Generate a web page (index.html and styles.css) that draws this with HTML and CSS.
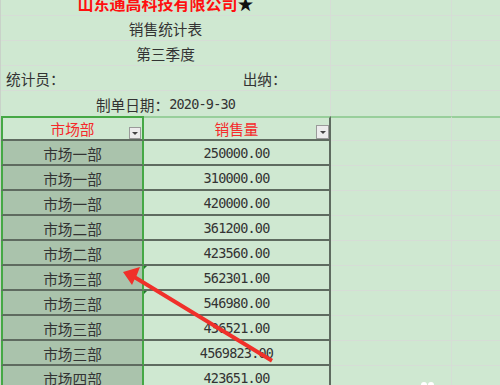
FILE: index.html
```html
<!DOCTYPE html>
<html lang="zh">
<head>
<meta charset="utf-8">
<title>销售统计表</title>
<link rel="stylesheet" href="styles.css">
</head>
<body>
<div class="sheet">
  <div class="row top">
    <div class="cell merged title">山东通高科技有限公司<span class="star">★</span></div>
    <div class="cell c"></div>
    <div class="cell d"></div>
  </div>
  <div class="row top">
    <div class="cell merged center">销售统计表</div>
    <div class="cell c"></div>
    <div class="cell d"></div>
  </div>
  <div class="row top">
    <div class="cell merged center">第三季度</div>
    <div class="cell c"></div>
    <div class="cell d"></div>
  </div>
  <div class="row top">
    <div class="cell merged split"><span>统计员：</span><span class="cashier">出纳：</span></div>
    <div class="cell c"></div>
    <div class="cell d"></div>
  </div>
  <div class="row top nobottom">
    <div class="cell merged center">制单日期：<span class="num">2020-9-30</span></div>
    <div class="cell c"></div>
    <div class="cell d"></div>
  </div>

  <div class="row head">
    <div class="cell a">市场部<span class="drop small"></span></div>
    <div class="cell b">销售量<span class="drop"></span></div>
    <div class="cell c"></div>
    <div class="cell d"></div>
  </div>
  <div class="row data"><div class="cell a">市场一部</div><div class="cell b num">250000.00</div><div class="cell c"></div><div class="cell d"></div></div>
  <div class="row data"><div class="cell a">市场一部</div><div class="cell b num">310000.00</div><div class="cell c"></div><div class="cell d"></div></div>
  <div class="row data"><div class="cell a">市场一部</div><div class="cell b num">420000.00</div><div class="cell c"></div><div class="cell d"></div></div>
  <div class="row data"><div class="cell a">市场二部</div><div class="cell b num">361200.00</div><div class="cell c"></div><div class="cell d"></div></div>
  <div class="row data"><div class="cell a">市场二部</div><div class="cell b num">423560.00</div><div class="cell c"></div><div class="cell d"></div></div>
  <div class="row data"><div class="cell a">市场三部</div><div class="cell b num flag">562301.00</div><div class="cell c"></div><div class="cell d"></div></div>
  <div class="row data"><div class="cell a">市场三部</div><div class="cell b num flag">546980.00</div><div class="cell c"></div><div class="cell d"></div></div>
  <div class="row data"><div class="cell a">市场三部</div><div class="cell b num">436521.00</div><div class="cell c"></div><div class="cell d"></div></div>
  <div class="row data"><div class="cell a">市场三部</div><div class="cell b num">4569823.00</div><div class="cell c"></div><div class="cell d"></div></div>
  <div class="row data"><div class="cell a">市场四部</div><div class="cell b num">423651.00</div><div class="cell c"></div><div class="cell d"></div></div>
</div>

<svg class="overlay" width="500" height="385" viewBox="0 0 500 385">
  <polygon points="123,272 140,267 136.5,276 273,359 271,362.5 134.5,279.5 132,285" fill="#f0302a"/>
  <circle cx="424" cy="385" r="3" fill="#ffffff"/>
  <circle cx="431" cy="385" r="3" fill="#ffffff"/>
</svg>
</body>
</html>
```

FILE: styles.css
```css
html, body {
  margin: 0;
  padding: 0;
}
body {
  width: 500px;
  height: 385px;
  overflow: hidden;
  background: #cfe8d1;
  font-family: "Noto Sans CJK SC", "Noto Sans", sans-serif;
  font-size: 14.67px;
  color: #333333;
  position: relative;
}
.sheet {
  margin-top: -9px;
  border-left: 1px solid #c9d2c9;
}
.row {
  display: grid;
  height: 25px;
}
.row.top {
  grid-template-columns: 330px 121px 1fr;
}
.row.head, .row.data {
  grid-template-columns: 143px 187px 121px 1fr;
}
.cell {
  box-sizing: border-box;
  height: 25px;
  display: flex;
  align-items: flex-end;
  line-height: 15px;
  padding-bottom: 4px;
  border-bottom: 1px solid #d6ddd6;
  white-space: nowrap;
  position: relative;
}
.row.nobottom .cell {
  border-bottom: none;
}
.merged {
  border-right: 1px solid #d6ddd6;
  justify-content: center;
}
.c {
  border-right: 1px solid #d6ddd6;
}
.title {
  color: #ff1010;
  font-weight: bold;
  font-size: 16px;
  padding-bottom: 4px;
}
.star {
  color: #111111;
  font-weight: normal;
}
.split {
  justify-content: flex-start;
  padding-left: 5px;
}
.cashier {
  margin-left: 178px;
}
.num {
  font-family: "DejaVu Sans Mono", "Liberation Mono", monospace;
  font-size: 13.5px;
  letter-spacing: -0.8px;
}

/* table */
.head .cell {
  border-top: 2px solid #98cf9b;
  border-bottom: 2px solid #5f6b60;
  color: #f52a2a;
  justify-content: center;
  padding-bottom: 3px;
}
.head .c, .head .d {
  border-bottom: 1px solid #d6ddd6;
}
.head .a {
  border-top-color: #45a845;
}
.a {
  border-left: 2px solid #45a845;
  border-right: 2px solid #45a845;
  justify-content: center;
}
.b {
  border-right: 2px solid #5f6b60;
  justify-content: center;
}
.data .a {
  background: #aac3ac;
  border-bottom: 2px solid #5f6b60;
  padding-bottom: 3px;
}
.data .b {
  border-bottom: 2px solid #5f6b60;
  padding-bottom: 3px;
  color: #333333;
}
.drop {
  position: absolute;
  right: 0;
  bottom: 0;
  width: 13px;
  height: 14px;
  box-sizing: border-box;
  background: #ececec;
  border: 1px solid #9a9a9a;
}
.drop.small {
  right: 1px;
  width: 12px;
  height: 12px;
}
.drop::after {
  content: "";
  position: absolute;
  left: 50%;
  top: 50%;
  margin-left: -3px;
  margin-top: -1px;
  border-left: 3px solid transparent;
  border-right: 3px solid transparent;
  border-top: 3px solid #444444;
}
.flag::before {
  content: "";
  position: absolute;
  left: 0;
  top: 0;
  border-top: 3px solid #1f7a2a;
  border-right: 3px solid transparent;
}
.overlay {
  position: absolute;
  left: 0;
  top: 0;
  pointer-events: none;
}
```
